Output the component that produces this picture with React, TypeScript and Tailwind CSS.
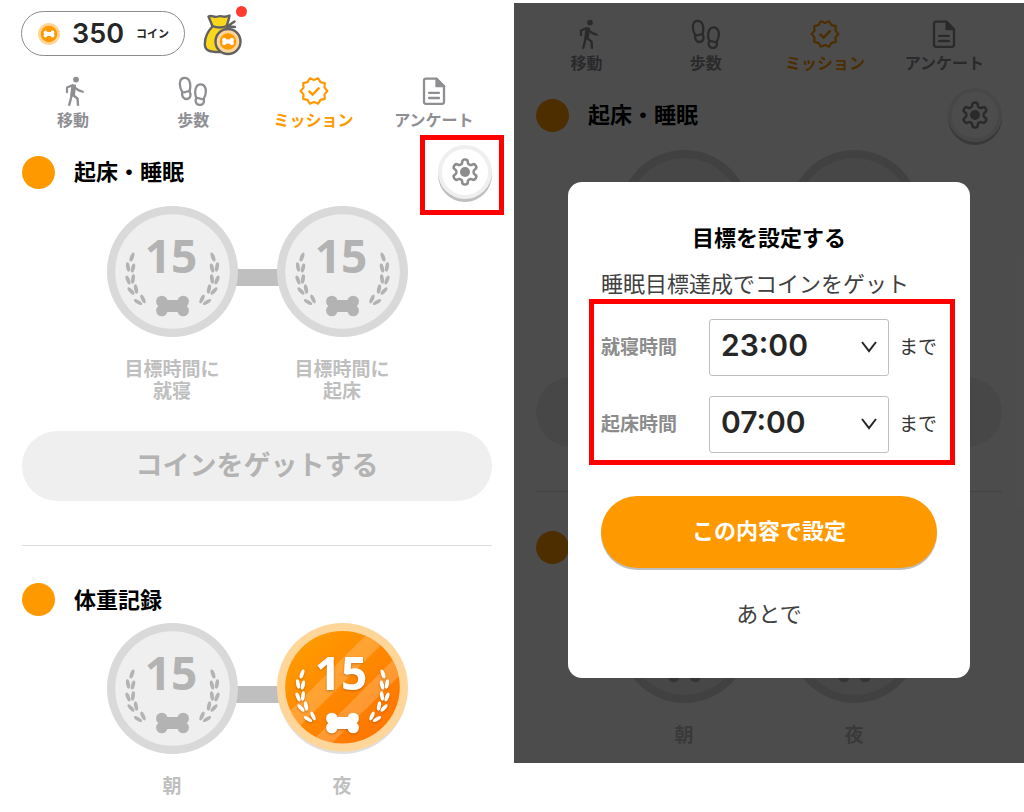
import type { ReactNode } from 'react';
import { clsx } from 'clsx';

type Goal = { label: string[]; earned?: boolean };

const sleepGoals: Goal[] = [
  { label: ['目標時間に', '就寝'] },
  { label: ['目標時間に', '起床'] },
];

const bedTimes = ['21:00', '22:00', '23:00', '24:00'];
const wakeTimes = ['05:00', '06:00', '07:00', '08:00'];

// x, y, rotation of each leaf on the left branch; the right branch is mirrored
const leaves = [
  [25, 51, 20],
  [21, 61, -10],
  [26, 62, 14],
  [21, 74, -22],
  [26, 73, 8],
  [24, 85, -42],
  [29, 83, -12],
  [31, 96, -58],
  [36, 93, -24],
];

const badgePoints = Array.from({ length: 20 }, (_, i) => {
  const r = i % 2 === 0 ? 13.4 : 11;
  const a = (i * Math.PI) / 10;
  return `${(15 + r * Math.cos(a)).toFixed(2)},${(15 + r * Math.sin(a)).toFixed(2)}`;
}).join(' ');

function Bone() {
  return (
    <>
      <rect x="-11" y="-6" width="22" height="12" />
      <circle cx="-10.7" cy="-4.6" r="5.7" />
      <circle cx="10.7" cy="-4.6" r="5.7" />
      <circle cx="-10.7" cy="4.6" r="5.7" />
      <circle cx="10.7" cy="4.6" r="5.7" />
    </>
  );
}

function Laurel() {
  const branch = leaves.map(([x, y, r]) => (
    <ellipse key={`${x}-${y}`} rx="1.9" ry="4.7" transform={`translate(${x} ${y}) rotate(${r})`} />
  ));
  return (
    <>
      <g>{branch}</g>
      <g transform="translate(131 0) scale(-1 1)">{branch}</g>
      <g transform="translate(65.5 100)">
        <Bone />
      </g>
    </>
  );
}

function Points() {
  return (
    <text x="64" y="67" textAnchor="middle" className="font-['Open_Sans',sans-serif] text-[46px] font-bold">
      15
    </text>
  );
}

function Medal({ earned }: { earned?: boolean }) {
  if (!earned) {
    return (
      <svg viewBox="0 0 131 131" className="relative size-[131px]" role="img">
        <circle cx="65.5" cy="65.5" r="65.5" fill="#d9d9d9" />
        <circle cx="65.5" cy="65.5" r="57.3" fill="#efefef" />
        <g fill="#b3b3b3">
          <Laurel />
          <Points />
        </g>
      </svg>
    );
  }
  return (
    <svg viewBox="0 0 131 131" className="relative size-[131px]" role="img">
      <defs>
        <linearGradient id="gold" x1="0.15" y1="0.15" x2="0.85" y2="0.85">
          <stop offset="0" stopColor="#ff9900" />
          <stop offset="1" stopColor="#ff7700" />
        </linearGradient>
        <clipPath id="face">
          <ellipse cx="65.5" cy="64.3" rx="57.3" ry="56.3" />
        </clipPath>
      </defs>
      <circle cx="65.5" cy="66" r="65" fill="#e0e0e0" />
      <ellipse cx="65.5" cy="64.3" rx="65.5" ry="64.3" fill="#ffd699" />
      <ellipse cx="65.5" cy="64.3" rx="57.3" ry="56.3" fill="url(#gold)" />
      <g clipPath="url(#face)" fill="#fff" fillOpacity="0.2">
        <path d="M101 0H126L-5 131H-30Z" />
        <path d="M153 0H175L44 131H22Z" />
      </g>
      <g fill="#fff" className="drop-shadow-[0_1px_1px_rgba(150,70,0,0.5)]">
        <Laurel />
        <Points />
      </g>
    </svg>
  );
}

function Coin({ className }: { className: string }) {
  return (
    <svg viewBox="0 0 22 22" className={className}>
      <circle cx="11" cy="11" r="11" fill="#ffd699" />
      <circle cx="11" cy="11" r="8.3" fill="#ff9900" />
      <g fill="#fff" transform="translate(11 11) scale(0.33)">
        <Bone />
      </g>
    </svg>
  );
}

function MoneyBag() {
  return (
    <svg viewBox="0 0 40 44" className="h-11 w-10" fill="none" stroke="#616161" strokeWidth="2.4" strokeLinecap="round" strokeLinejoin="round">
      <path
        fill="#f9d71c"
        d="M9.5 14.5C8 10 6.5 7 5.5 4.5C9 2.5 11 6 15 4.5C19 3 20 6.5 26.5 3.5C26 7 25 10 23.5 14.5C29 19 33 25 32 35C31 40 26 40 16 40C7 40 2 39 1.8 32C1.8 25 5 19 9.5 14.5Z"
      />
      <path d="M9.5 14C14 16 19 16 24 14M25 14L31.5 9.5M25.5 14.5L32 15" />
      <circle cx="25" cy="29.500" r="12.500" fill="#ffd699" />
      <circle cx="25" cy="29.500" r="8.300" fill="#ff9900" stroke="none" />
      <g fill="#fff" stroke="none" transform="translate(25 29.5) scale(0.36)">
        <Bone />
      </g>
    </svg>
  );
}

function WalkIcon() {
  return (
    <svg viewBox="0 0 30 30" className="size-[30px]" fill="none" stroke="currentColor" strokeLinecap="round" strokeLinejoin="round">
      <circle cx="18" cy="3.6" r="2.9" fill="currentColor" stroke="none" />
      <path d="M9 16.2V11.6L14.5 9.2L18.2 12.6C19.800 14.2 21.8 15 24.800 15.800" strokeWidth="2.200" />
      <path d="M14.800 19L19.500 22.500L20 28.800M14 18L11.300 28.800" strokeWidth="2.400" />
      <path d="M14.300 9.500H17L16 19.200H13.200Z" fill="currentColor" strokeWidth="2" />
    </svg>
  );
}

function StepsIcon() {
  return (
    <svg viewBox="0 0 30 30" className="size-[30px]" fill="none" stroke="currentColor" strokeWidth="2.3" strokeLinejoin="round">
      <path d="M4.2 16C2 12 1.2 8.5 2.3 5C3.5 1 9 .8 11 4.3C12.8 7.5 12.6 11 11.6 15.2" />
      <path d="M4.2 16C7 17.2 9 14.8 11.6 15.2C13 18 13 22.8 9 23C5 23.2 3.5 19.5 4.2 16Z" />
      <path d="M18.3 22C16.8 18 16.6 14.5 18.3 11C20.3 7.3 25.5 7.5 27.2 11.5C28.6 15.2 27.8 19 25.7 22.8" />
      <path d="M18.3 22C21 21.5 23 24 25.7 22.8C26.5 26.5 25 29.3 21.5 29C17.5 28.6 17 24.5 18.3 22Z" />
    </svg>
  );
}

function MissionIcon() {
  return (
    <svg viewBox="0 0 30 30" className="size-[30px]" fill="none" stroke="currentColor" strokeWidth="2.2" strokeLinejoin="round">
      <polygon points={badgePoints} />
      <path d="M9.6 14.8L13.6 18.6L20.4 11.6" strokeWidth="2.400" strokeLinejoin="miter" />
    </svg>
  );
}

function SurveyIcon() {
  return (
    <svg viewBox="0 0 30 30" className="size-[30px]" fill="none" stroke="currentColor" strokeWidth="2.3" strokeLinejoin="round">
      <path d="M6.500 2.700H17.500L25 10.200V25.800A2 2 0 0 1 23 27.800H7A2 2 0 0 1 5 25.800V4.700A2 2 0 0 1 7 2.700Z" />
      <path d="M17.500 2.700V10.200H25Z" fill="currentColor" />
      <path d="M10 16.800H20M10 22H20" strokeLinecap="round" />
    </svg>
  );
}

function GearIcon() {
  return (
    <svg viewBox="0 0 24 24" className="size-[30px]" fill="none" stroke="currentColor" strokeWidth="2">
      <path d="M12.22 2h-.44a2 2 0 0 0-2 2v.18a2 2 0 0 1-1 1.73l-.43.25a2 2 0 0 1-2 0l-.15-.08a2 2 0 0 0-2.73.73l-.22.38a2 2 0 0 0 .73 2.73l.15.1a2 2 0 0 1 1 1.72v.51a2 2 0 0 1-1 1.74l-.15.09a2 2 0 0 0-.73 2.73l.22.38a2 2 0 0 0 2.73.73l.15-.08a2 2 0 0 1 2 0l.43.25a2 2 0 0 1 1 1.73V20a2 2 0 0 0 2 2h.44a2 2 0 0 0 2-2v-.18a2 2 0 0 1 1-1.73l.43-.25a2 2 0 0 1 2 0l.15.08a2 2 0 0 0 2.73-.73l.22-.39a2 2 0 0 0-.73-2.73l-.15-.08a2 2 0 0 1-1-1.74v-.5a2 2 0 0 1 1-1.74l.15-.09a2 2 0 0 0 .73-2.73l-.22-.38a2 2 0 0 0-2.73-.73l-.15.08a2 2 0 0 1-2 0l-.43-.25a2 2 0 0 1-1-1.73V4a2 2 0 0 0-2-2z" />
      <circle cx="12" cy="12" r="4" fill="currentColor" stroke="none" />
    </svg>
  );
}

const tabs = [
  { name: '移動', icon: WalkIcon },
  { name: '歩数', icon: StepsIcon },
  { name: 'ミッション', icon: MissionIcon, active: true },
  { name: 'アンケート', icon: SurveyIcon },
];

function Tabs() {
  return (
    <nav className="grid grid-cols-4 pl-[13px] pr-5">
      {tabs.map(({ name, icon: Icon, active }) => (
        <button
          key={name}
          type="button"
          className={clsx(
            'flex flex-col items-center gap-[3px] text-base leading-5 font-bold whitespace-nowrap',
            active ? 'text-[#ff9900]' : 'text-[#8e8e93]'
          )}
        >
          <Icon />
          {name}
        </button>
      ))}
    </nav>
  );
}

function SectionTitle({ children, action }: { children: ReactNode; action?: ReactNode }) {
  return (
    <div className="flex items-center">
      <span className="size-[33px] rounded-full bg-[#ff9900]" />
      <h2 className="ml-[19px] flex-1 pb-1 text-[22px] leading-7 font-bold text-black">{children}</h2>
      {action}
    </div>
  );
}

function SettingsButton({ marked }: { marked?: boolean }) {
  return (
    <div className="relative">
      <button
        type="button"
        aria-label="設定"
        className="flex size-[54px] items-center justify-center rounded-full border-4 border-[#efefef] bg-white text-[#8c8c8c] shadow-[0_3px_0_#bfbfbf]"
      >
        <GearIcon />
      </button>
      {marked && <span className="pointer-events-none absolute -top-2.5 -right-3 -bottom-4 -left-[18px] border-5 border-[#ff0000]" />}
    </div>
  );
}

function Goals({ goals }: { goals: Goal[] }) {
  return (
    <ul className="relative flex justify-center gap-[39px]">
      <li aria-hidden="true" className="absolute top-[63px] left-1/2 h-[17px] w-20 -translate-x-1/2 bg-[#bfbfbf]" />
      {goals.map((goal) => (
        <li key={goal.label.join('')} className="flex flex-col items-center gap-5">
          <Medal earned={goal.earned} />
          <p className="text-center text-[19px] leading-[22px] font-bold text-[#bfbfbf]">
            {goal.label.map((line) => (
              <span key={line} className="block">{line}</span>
            ))}
          </p>
        </li>
      ))}
    </ul>
  );
}

function Missions({ behindDialog }: { behindDialog?: boolean }) {
  const gap = behindDialog ? 'gap-2' : 'gap-[7px]';
  return (
    <div className="px-[22px]">
      <section className={clsx('flex flex-col', gap)}>
        <SectionTitle action={<SettingsButton marked={!behindDialog} />}>起床・睡眠</SectionTitle>
        <Goals goals={sleepGoals} />
      </section>
      <button
        type="button"
        className={clsx(
          'h-[70px] w-full rounded-full bg-[#efefef] pb-1 text-[27px] font-bold text-[#b3b3b3]',
          behindDialog ? 'mt-8' : 'mt-[30px]'
        )}
      >
        コインをゲットする
      </button>
      <hr className={clsx('mt-11 border-[#dedede]', behindDialog ? 'mb-[39px]' : 'mb-[37px]')} />
      <section className={clsx('flex flex-col', gap)}>
        <SectionTitle>体重記録</SectionTitle>
        <Goals goals={[{ label: ['朝'] }, { label: ['夜'], earned: !behindDialog }]} />
      </section>
    </div>
  );
}

function TimeField({ id, label, value, options }: { id: string; label: string; value: string; options: string[] }) {
  return (
    <div className="flex items-center">
      <label htmlFor={id} className="w-[108px] pb-1 text-[19px] leading-7 font-bold text-[#8c8c8c]">{label}</label>
      <div className="relative flex-1">
        <select
          id={id}
          defaultValue={value}
          className="h-[57px] w-full appearance-none rounded-[3px] border border-[#bfbfbf] bg-white px-[11px] pb-1 font-['Inter',sans-serif] text-[30px] font-semibold text-[#262626]"
        >
          {options.map((o) => (
            <option key={o}>{o}</option>
          ))}
        </select>
        <svg viewBox="0 0 16 12" className="pointer-events-none absolute top-[22px] right-3 h-3 w-4" fill="none" stroke="#262626" strokeWidth="2">
          <path d="M1 1L8 10L15 1" />
        </svg>
      </div>
      <span className="w-12 pb-1 pl-2.5 text-[19px] leading-7 text-[#333333]">まで</span>
    </div>
  );
}

function GoalDialog() {
  return (
    <div role="dialog" aria-labelledby="goal-title" className="rounded-[14px] bg-white px-[33px] pt-[38px] pb-[50px]">
      <h2 id="goal-title" className="text-center text-[22px] leading-8 font-bold text-black">目標を設定する</h2>
      <p className="mt-3.5 text-[22px] leading-8 whitespace-nowrap text-[#404040]">睡眠目標達成でコインをゲット</p>
      <div className="relative mt-[21px] flex flex-col gap-5">
        <TimeField id="bed-time" label="就寝時間" value="23:00" options={bedTimes} />
        <TimeField id="wake-time" label="起床時間" value="07:00" options={wakeTimes} />
        <span className="pointer-events-none absolute -top-5 -right-[18px] -bottom-3 -left-3 border-5 border-[#ff0000]" />
      </div>
      <button
        type="button"
        className="mt-[43px] h-[72px] w-full rounded-full bg-[#ff9900] pb-1.5 text-[22px] font-bold text-white shadow-[0_2px_0_#bfbfbf]"
      >
        この内容で設定
      </button>
      <button type="button" className="mt-7 block w-full text-[22px] leading-8 text-[#404040]">あとで</button>
    </div>
  );
}

export default function App() {
  return (
    <main className="grid grid-cols-[257fr_255fr] items-start bg-white font-['Noto_Sans_CJK_JP',sans-serif]">
      <div className="pt-[11px] pb-3.5">
        <header className="flex items-center gap-[18px] pl-[21px]">
          <div className="flex h-[45px] w-[164px] items-center rounded-full border border-[#8c8c8c] pl-4 text-[#262626]">
            <Coin className="size-[22px]" />
            <span className="ml-3 font-['Inter',sans-serif] text-[27px] leading-8 font-semibold">350</span>
            <span className="ml-3 text-[11px] font-bold">コイン</span>
          </div>
          <div className="relative">
            <MoneyBag />
            <span className="absolute -top-1.5 -right-1 size-[11px] rounded-full bg-[#ff3b30]" />
          </div>
        </header>
        <div className="mt-5 mb-4">
          <Tabs />
        </div>
        <Missions />
      </div>

      <div className="relative mt-[3px] pt-4 pb-[18px]">
        <div className="mb-4">
          <Tabs />
        </div>
        <Missions behindDialog />
        <div className="absolute inset-0 bg-black/70 px-[54px] pt-[179px]">
          <GoalDialog />
        </div>
      </div>
    </main>
  );
}
